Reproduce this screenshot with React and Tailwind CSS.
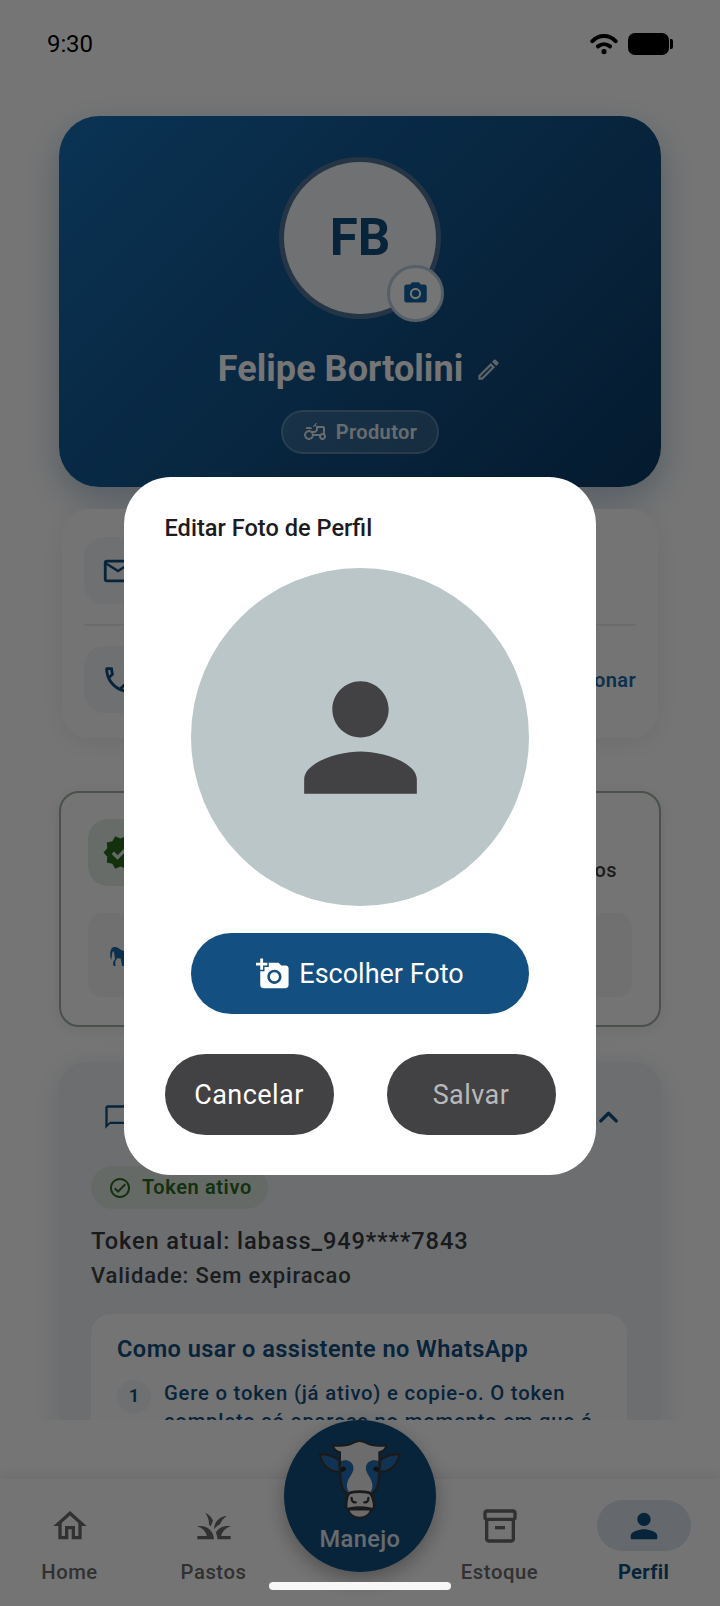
import React from 'react';
import {
  MdAddAPhoto,
  MdCameraAlt,
  MdOutlineAgriculture,
  MdOutlineChatBubbleOutline,
  MdOutlineCheckCircle,
  MdOutlineEdit,
  MdOutlineEmail,
  MdOutlineGrass,
  MdOutlineHome,
  MdOutlineInventory2,
  MdOutlinePhone,
  MdPerson,
  MdVerified,
} from 'react-icons/md';

const StatusBar = () => (
  <div className="flex h-[88px] items-center justify-between pl-[47px] pr-[47px] text-black">
    <span className="text-[24px] leading-none tracking-[-0.1px]">9:30</span>
    <div className="flex items-center">
      <svg width="28" height="22" viewBox="0 0 28 22" fill="none" stroke="black" strokeWidth="4" strokeLinecap="round" className="mr-[10px]">
        <path d="M2.4 8.2C9 1.4 19 1.4 25.6 8.2" />
        <path d="M8 13.4c3.6-3 8.4-3 12 0" />
        <circle cx="14" cy="18.6" r="2.6" fill="black" stroke="none" />
      </svg>
      <div className="h-[22.5px] w-[41px] rounded-[7px] bg-black" />
      <div className="ml-[1px] h-[10px] w-[3px] rounded-r-[2px] bg-black" />
    </div>
  </div>
);

const ProfileCard = () => (
  <section className="flex flex-col items-center rounded-[40px] bg-[linear-gradient(135deg,#1870b6_0%,#145f9e_30%,#125085_60%,#0b3a66_100%)] pt-[41px] pb-[33px] shadow-[0_13px_34px_rgba(20,80,130,0.3)]">
    <div className="relative size-[162px] rounded-full bg-[#51759a] p-[5px]">
      <div className="flex size-full items-center justify-center rounded-full bg-[#f4f6f8] text-[51px] font-bold text-[#134f80]">FB</div>
      <div className="absolute -right-[3px] -bottom-[3px] flex size-[57px] items-center justify-center rounded-full border-[3px] border-[#bccfe2] bg-white text-[#1565a8]">
        <MdCameraAlt size={27} />
      </div>
    </div>
    <div className="mt-[28px] flex h-[44px] items-center gap-[12px] text-white">
      <h1 className="text-[36px] leading-[44px] font-bold tracking-[0.05px] whitespace-nowrap">Felipe Bortolini</h1>
      <MdOutlineEdit size={27} className="text-[#d0dbe6]" />
    </div>
    <div className="mt-[19px] flex h-[44px] w-[158px] items-center justify-center gap-[9px] rounded-full border-2 border-white/20 bg-white/15 text-[#e4ebf2]">
      <MdOutlineAgriculture size={24} />
      <span className="text-[20px] font-semibold tracking-[0.4px]">Produtor</span>
    </div>
  </section>
);

const IconBox = ({ children }) => (
  <div className="flex size-[67px] items-center justify-center rounded-[20px] bg-[#f2f5f8] text-[#134f80]">{children}</div>
);

const ContactCard = () => (
  <section className="mx-[3px] mt-[22px] h-[229px] rounded-[27px] bg-[#fdfdfd] px-[22px] pt-[28px] shadow-[0_5px_27px_rgba(0,0,0,0.07)]">
    <div className="flex items-center gap-[20px]">
      <IconBox><MdOutlineEmail size={34} /></IconBox>
      <span className="text-[20px] text-[#3c4043]">E-mail</span>
    </div>
    <div className="my-[20px] h-[2px] bg-[#e8e9ec]" />
    <div className="flex items-center gap-[20px]">
      <IconBox><MdOutlinePhone size={34} /></IconBox>
      <span className="text-[20px] text-[#3c4043]">Telefone</span>
      <span className="ml-auto text-[20px] font-semibold tracking-[0.4px] text-[#1b68aa]">Adicionar</span>
    </div>
  </section>
);

const PlanCard = () => (
  <section className="mt-[53px] h-[236px] rounded-[20px] border-2 border-[#a0b0a2] bg-[#fdfdfd] px-[27px] py-[26px] shadow-[0_3px_16px_rgba(20,60,20,0.09)]">
    <div className="flex h-[67px] items-center">
      <div className="flex size-[67px] shrink-0 items-center justify-center rounded-[20px] bg-[#e3ebe3] pr-[2px] text-[#2b6b1c]">
        <MdVerified size={37} />
      </div>
      <span className="mr-[15px] ml-auto pt-[34px] text-[20px] leading-[30px] font-medium tracking-[0.4px] text-[#3c4043]">Todos os recursos liberados</span>
    </div>
    <div className="mt-[27px] flex h-[84px] items-center rounded-[14px] bg-[#f3f5f6] pt-[4px] pl-[22px]">
      {/* Horse */}
      <svg width="30" height="22" viewBox="0 0 30 22" fill="#1b68aa">
        <path d="M1.200 14C-.4 10 0 5 1.600 2.600 3 .8 5.400.8 7 1.500c2.400.8 4 2.700 6.500 3.300 2 .4 4 .2 6-.4l4-4 5.500 4-1 3-3.500-.5-3 4.700 1 8.400h-2.300l-1.700-7-4.500-.5 .4 7.500h-2.300l-1.400-7.500-3.500-.300-2 3.300.3 4.500H3.500L3 16.500l2-3.500-.8-5.500C4.100 6 3.400 4.800 2.800 5.500 1.700 7.500 2.200 10.500 1.200 14z" />
      </svg>
    </div>
  </section>
);

const TokenCard = () => (
  <section className="mt-[35px] rounded-[27px] bg-[#ebeff4] px-[32px] pt-[30px] pb-[40px] shadow-[0_5px_30px_rgba(20,60,110,0.13)]">
    <div className="flex h-[50px] items-center justify-between pr-[2px] pl-[12px] text-[#134f80]">
      <MdOutlineChatBubbleOutline size={28} />
      <svg width="37" height="37" viewBox="0 0 24 24" fill="none" stroke="currentColor" strokeWidth="2.200" strokeLinecap="round" strokeLinejoin="round">
        <path d="M7 14.200l5-5 5 5" />
      </svg>
    </div>
    <div className="mt-[24px] flex h-[43px] w-[177px] items-center gap-[10px] rounded-full bg-[#dde7e0] pl-[17px] text-[#2b6b1c]">
      <MdOutlineCheckCircle size={24} />
      <span className="pb-[1px] text-[20px] font-semibold tracking-[0.600px] whitespace-nowrap">Token ativo</span>
    </div>
    <p className="mt-[15px] text-[23.600px] leading-[34px] font-medium tracking-[0.900px] text-[#36393e]">Token atual: labass_949****7843</p>
    <p className="mt-[1px] text-[22px] leading-[34px] font-medium tracking-[0.8px] text-[#3c4043]">Validade: Sem expiracao</p>
    <div className="mt-[21px] mr-[2px] rounded-[20px] bg-[#fcfdff] px-[26px] pt-[20px] pb-[24px] text-[#134f80]">
      <h2 className="text-[23.600px] leading-[30px] font-semibold tracking-[0.430px] whitespace-nowrap">Como usar o assistente no WhatsApp</h2>
      <div className="mt-[15px] flex gap-[13px]">
        <span className="mt-[1px] flex size-[34px] shrink-0 items-center justify-center rounded-full bg-[#f0f4f8] text-[18.500px] font-semibold">1</span>
        <p className="text-[20.250px] leading-[28px] font-medium tracking-[0.8px] whitespace-nowrap">
          Gere o token (já ativo) e copie-o. O token
          <br />
          completo só aparece no momento em que é
        </p>
      </div>
    </div>
  </section>
);

const NavItem = ({ label, active, children }) => (
  <div className="flex w-[139px] flex-col items-center text-[#6b6b6b]">
    <div className={active ? 'flex h-[51px] w-[94px] items-center justify-center rounded-full bg-[#dce2ed] text-[#134f80]' : 'flex h-[51px] w-[94px] items-center justify-center rounded-full'}>
      {children}
    </div>
    <span className={active ? 'mt-[9px] text-[20.250px] leading-[24px] font-bold tracking-[0.3px] text-[#134f80]' : 'mt-[9px] text-[20.250px] leading-[24px] font-medium tracking-[0.550px]'}>{label}</span>
  </div>
);

const CowIcon = () => (
  <svg width="87" height="84" viewBox="175 115 261 252" strokeLinejoin="round" strokeLinecap="round">
    {/* Ears */}
    <g fill="#2470b5" stroke="#3a3a3c" strokeWidth="7">
      <path d="M244 184c-15-14-38-22-61-21 5 28 25 53 55 54l13-5z" />
      <path d="M362 184c15-14 38-22 61-21-5 28-25 53-55 54l-13-5z" />
    </g>
    {/* Head */}
    <path d="M243 180c-3 15 2 30 2 45 0 26 6 47 20 58h76c14-11 20-32 20-58 0-15 5-30 2-45z" fill="#2470b5" stroke="#3a3a3c" strokeWidth="7" />
    <path d="M246 185c-3-10-3-19-2-27-11-2-19-10-22-21 15 4 30 0 44-1 16-1 20-12 37-12s21 11 37 12c14 1 29 5 44 1-3 11-11 19-22 21 1 8 1 17-2 27-15-8-34-2-38 15-5 22 22 35 19 63-1 8-6 12-6 17h-64c0-5-5-9-6-17-3-28 24-41 19-63-4-17-23-23-38-15z" fill="#ececec" />
    <path d="M244 196V158c-11-2-19-10-22-21 15 4 30 0 44-1 16-1 20-12 37-12s21 11 37 12c14 1 29 5 44 1-3 11-11 19-22 21v37" fill="none" stroke="#3a3a3c" strokeWidth="6" />
    <path d="M245 207c4-9 16-8 18 2-5 9-14 9-18 4zM361 207c-4-9-16-8-18 2 5 9 14 9 18 4z" fill="#29292b" />
    {/* Muzzle */}
    <path d="M268 330c6 14 18 24 35 24s29-10 35-24z" fill="#ececec" stroke="#3a3a3c" strokeWidth="5" />
    <path d="M275 279c18-4 38-4 56 0 10 3 16 30 16 42-2 8-8 8-16 6-18-4-38-4-56 0-8 2-13 0-13-6 0-14 3-39 13-42z" fill="#ececec" stroke="#3a3a3c" strokeWidth="8" />
    <path d="M279 295c-1 9 4 14 12 13M329 295c1 9-4 14-12 13" fill="none" stroke="#3a3a3c" strokeWidth="7" />
  </svg>
);

const BottomNav = () => (
  <nav className="relative mt-[59px] flex h-[127px] justify-between bg-[#fdfdfd] pt-[21px] pr-[7px] shadow-[0_-4px_14px_rgba(0,0,0,0.08)]">
    <div className="flex gap-[5px]">
      <NavItem label="Home"><MdOutlineHome size={40} /></NavItem>
      <NavItem label="Pastos"><MdOutlineGrass size={40} /></NavItem>
    </div>
    <div className="flex gap-[5px]">
      <NavItem label="Estoque"><MdOutlineInventory2 size={40} /></NavItem>
      <NavItem label="Perfil" active>
        <svg width="40" height="40" viewBox="0 0 24 24" fill="currentColor">
          <path d="M12 12c2.210 0 4-1.790 4-4s-1.790-4-4-4-4 1.790-4 4 1.790 4 4 4zm0 2c-2.670 0-8 1.340-8 4v1c0 .55.45 1 1 1h14c.55 0 1-.45 1-1v-1c0-2.660-5.330-4-8-4z" />
        </svg>
      </NavItem>
    </div>
    {/* Floating action button */}
    <div className="absolute -top-[59px] left-1/2 flex size-[152px] -translate-x-1/2 flex-col items-center rounded-full bg-[#134f80] pt-[18px] shadow-[0_7px_20px_rgba(0,0,0,0.3)]">
      <CowIcon />
      <span className="mt-[4px] text-[23.600px] leading-[26px] font-medium tracking-[0.4px] text-[#e3e9ef]">Manejo</span>
    </div>
  </nav>
);

const PhotoDialog = () => (
  <div role="dialog" className="flex h-[698px] w-[472px] flex-col rounded-[47px] bg-white px-[40.500px] pt-[34px] text-[#1d1b20]">
    <h2 className="text-[23.600px] leading-[34px] font-medium whitespace-nowrap">Editar Foto de Perfil</h2>
    <div className="mt-[23px] flex size-[338px] items-center justify-center self-center rounded-full bg-[#bac6c8]">
      <MdPerson size={169} className="text-[#424143]" />
    </div>
    <button className="mt-[27px] flex h-[81px] w-[338px] items-center justify-center gap-[9px] self-center rounded-full bg-[#134f80] text-[27px] text-white">
      <MdAddAPhoto size={34} />
      <span className="pt-[2px]">Escolher Foto</span>
    </button>
    <div className="mt-[40px] flex justify-between text-[27px] tracking-[0.450px]">
      <button className="h-[81px] w-[169px] rounded-full bg-[#424143] pt-[2px] text-white">Cancelar</button>
      <button className="h-[81px] w-[169px] rounded-full bg-[#424143] pt-[2px] text-[#b9b9ba]">Salvar</button>
    </div>
  </div>
);

export default function App() {
  return (
    <div className="relative h-[1606px] w-[720px] overflow-hidden bg-white font-['Roboto',sans-serif]">
      <StatusBar />
      <main className="h-[1332px] overflow-hidden px-[59px] pt-[28px]">
        <ProfileCard />
        <ContactCard />
        <PlanCard />
        <TokenCard />
      </main>
      <BottomNav />

      {/* Scrim */}
      <div className="absolute inset-0 flex justify-center bg-black/54 pt-[477px]">
        <PhotoDialog />
      </div>
      <div className="absolute bottom-[16px] left-[269px] h-[8px] w-[182px] rounded-full bg-[#f7f7f7]" />
    </div>
  );
}
